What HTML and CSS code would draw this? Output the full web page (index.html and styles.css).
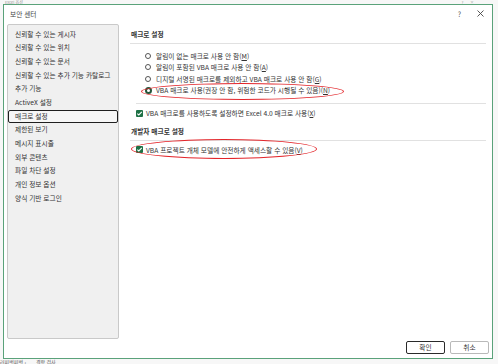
FILE: index.html
```html
<!DOCTYPE html>
<html lang="ko">
<head>
<meta charset="utf-8">
<title>보안 센터</title>
<link rel="stylesheet" href="styles.css">
</head>
<body>
<div class="desk">
  <div class="behind-top"><span>Excel 옵션</span><span class="bt-icons">?&nbsp;&nbsp;&nbsp;&nbsp;&nbsp;&nbsp;×</span></div>
  <div class="behind-bottom"><span>러피벗피벗 ›</span><span class="bb2">결함 검사</span></div>
</div>
<div class="dialog">
  <div class="titlebar">
    <span class="title">보안 센터</span>
    <span class="tb-help">?</span>
    <svg class="tb-close" width="7" height="7" viewBox="0 0 7 7"><path d="M0.5 0.5 L6.5 6.5 M6.5 0.5 L0.5 6.5" stroke="#444" stroke-width="0.9" fill="none"/></svg>
  </div>
  <div class="main">
    <ul class="nav">
      <li>신뢰할 수 있는 게시자</li>
      <li>신뢰할 수 있는 위치</li>
      <li>신뢰할 수 있는 문서</li>
      <li>신뢰할 수 있는 추가 기능 카탈로그</li>
      <li>추가 기능</li>
      <li>ActiveX 설정</li>
      <li class="sel">매크로 설정</li>
      <li>제한된 보기</li>
      <li>메시지 표시줄</li>
      <li>외부 콘텐츠</li>
      <li>파일 차단 설정</li>
      <li>개인 정보 옵션</li>
      <li>양식 기반 로그인</li>
    </ul>
    <div class="content">
      <div class="heading">매크로 설정</div>
      <div class="rule"></div>
      <div class="radios">
        <div class="opt"><span class="radio"></span>알림이 없는 매크로 사용 안 함(<u>M</u>)</div>
        <div class="opt"><span class="radio"></span>알림이 포함된 VBA 매크로 사용 안 함(<u>A</u>)</div>
        <div class="opt"><span class="radio"></span>디지털 서명된 매크로를 제외하고 VBA 매크로 사용 안 함(<u>G</u>)</div>
        <div class="opt"><span class="radio on"></span>VBA 매크로 사용(권장 안 함, 위험한 코드가 시행될 수 있음)(<u>N</u>)</div>
      </div>
      <div class="rule indent"></div>
      <div class="chk first"><span class="box"><svg width="7" height="7" viewBox="0 0 7 7"><path d="M1.3 3.6 L2.8 5 L5.8 1.9" stroke="#fff" stroke-width="1.1" fill="none"/></svg></span>VBA 매크로를 사용하도록 설정하면 Excel 4.0 매크로 사용(<u>X</u>)</div>
      <div class="heading h2">개발자 매크로 설정</div>
      <div class="rule"></div>
      <div class="chk"><span class="box"><svg width="7" height="7" viewBox="0 0 7 7"><path d="M1.3 3.6 L2.8 5 L5.8 1.9" stroke="#fff" stroke-width="1.1" fill="none"/></svg></span>VBA 프로젝트 개체 모델에 안전하게 액세스할 수 있음(<u>V</u>)</div>
      <span class="mark m1"></span>
      <span class="mark m2"></span>
    </div>
  </div>
  <div class="footer">
    <button class="btn ok">확인</button>
    <button class="btn">취소</button>
  </div>
</div>
</body>
</html>
```
FILE: styles.css
```css
* { box-sizing: border-box; }
html, body { margin: 0; padding: 0; }
body {
  width: 498px;
  height: 364px;
  overflow: hidden;
  background: #f7f7f7;
  font-family: "Noto Sans CJK KR", "Noto Sans", sans-serif;
  font-size: 6.7px;
  color: #333;
  position: relative;
}
.desk {
  height: 364px;
  display: flex;
  flex-direction: column;
  justify-content: space-between;
  color: #999;
}
.behind-top {
  display: flex;
  justify-content: space-between;
  padding: 0 24px 0 5px;
  font-size: 4px;
  line-height: 4px;
  height: 4px;
}
.behind-bottom {
  display: flex;
  gap: 10px;
  font-size: 5px;
  line-height: 5px;
  height: 5px;
  color: #555;
}

.dialog {
  position: absolute;
  left: 3px;
  top: 4px;
  width: 490px;
  height: 355px;
  background: #fff;
  border: 1px solid #5aa27a;
  display: flex;
  flex-direction: column;
}
.titlebar {
  height: 19px;
  display: flex;
  align-items: center;
  padding: 0 8px 0 6px;
  flex: none;
}
.title { flex: 1; color: #444; margin-top: -2px; }
.tb-help { color: #555; font-size: 7px; margin-right: 16px; margin-top: -2px; }
.tb-close { margin-top: -2px; }

.main {
  height: 315px;
  display: flex;
  flex: none;
  padding-left: 3px;
}
.nav {
  list-style: none;
  margin: 0;
  padding: 2.5px 0 0 0;
  width: 112px;
  height: 315px;
  background: #f0f0f0;
  border: 1px solid #c9c9c9;
  border-radius: 2px;
  flex: none;
}
.nav li {
  height: 13.7px;
  line-height: 13.7px;
  padding-left: 7px;
  white-space: nowrap;
  color: #333;
}
.nav li.sel {
  border: 1px solid #1f1f1f;
  border-radius: 2px;
  line-height: 11.7px;
  padding-left: 6px;
  background: #f6f6f6;
}

.content {
  position: relative;
  flex: 1;
  margin-left: 11px;
  margin-right: 6px;
  padding-top: 5px;
}
.heading {
  line-height: 10px;
  font-weight: 700;
  color: #333;
  padding-left: 1px;
}
.rule {
  height: 1px;
  background: #e1e1e1;
  margin-top: 4px;
}
.rule.indent { margin-left: 6px; margin-top: 7px; }
.radios { margin-top: 6px; }
.opt {
  height: 11.5px;
  display: flex;
  align-items: center;
  padding-left: 15px;
  white-space: nowrap;
}
.radio {
  width: 6px;
  height: 6px;
  border: 0.8px solid #555;
  border-radius: 50%;
  background: #fff;
  margin-right: 5px;
  flex: none;
}
.radio.on {
  width: 7px;
  height: 7px;
  border: 2px solid #24553a;
  margin-left: -0.5px;
  margin-right: 4.5px;
}
.chk {
  height: 11px;
  display: flex;
  align-items: center;
  padding-left: 6px;
  margin-top: 3.5px;
  white-space: nowrap;
}
.box {
  width: 7px;
  height: 7px;
  background: #1e7145;
  border-radius: 1px;
  margin-right: 3px;
  flex: none;
  display: flex;
}
.heading.h2 { margin-top: 7.5px; }
.h2 + .rule { margin-top: 3.5px; }
u { text-decoration: underline; text-underline-offset: 1px; }

.mark {
  position: absolute;
  border: 1px solid #e3262b;
  border-radius: 50%;
}
.m1 { left: 11px; top: 59px; width: 203px; height: 17px; }
.m2 { left: 1px; top: 115px; width: 186px; height: 20px; }

.footer {
  display: flex;
  justify-content: flex-end;
  gap: 5px;
  margin-top: 2px;
  padding-right: 3px;
  height: 13px;
  flex: none;
}
.btn {
  font-family: inherit;
  font-size: 6.7px;
  color: #333;
  background: #fff;
  border: 1px solid #b9b9b9;
  border-radius: 2px;
  width: 39px;
  height: 13px;
  padding: 0;
  line-height: 11px;
}
.btn.ok { border: 1.5px solid #2a2a2a; }
```
